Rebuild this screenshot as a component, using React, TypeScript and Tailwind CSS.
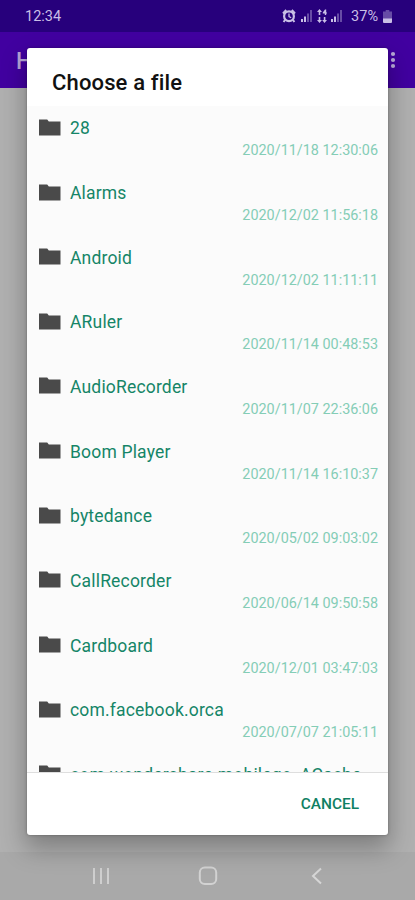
const files = [
  { name: "28", date: "2020/11/18 12:30:06" },
  { name: "Alarms", date: "2020/12/02 11:56:18" },
  { name: "Android", date: "2020/12/02 11:11:11" },
  { name: "ARuler", date: "2020/11/14 00:48:53" },
  { name: "AudioRecorder", date: "2020/11/07 22:36:06" },
  { name: "Boom Player", date: "2020/11/14 16:10:37" },
  { name: "bytedance", date: "2020/05/02 09:03:02" },
  { name: "CallRecorder", date: "2020/06/14 09:50:58" },
  { name: "Cardboard", date: "2020/12/01 03:47:03" },
  { name: "com.facebook.orca", date: "2020/07/07 21:05:11" },
  { name: "com.wondershare.mobilego_ACache", date: "" },
];

function FolderIcon() {
  return (
    <svg width="22" height="17" viewBox="0 0 22 17" fill="#4a4a4a" className="relative -top-px shrink-0">
      <path d="M0 .5h8.2l1.6 2H21.5v14H0z" />
    </svg>
  );
}

function SignalIcon() {
  return (
    <svg width="12" height="12" viewBox="0 0 12 12" fill="#c9bfe6">
      <rect x="0" y="9" width="2" height="3" />
      <rect x="3" y="6.5" width="2" height="5.5" />
      <rect x="6" y="3.5" width="2" height="8.5" fillOpacity=".4" />
      <rect x="9" y="0" width="2" height="12" fillOpacity=".4" />
    </svg>
  );
}

function StatusBar() {
  return (
    <div className="flex h-8 items-center bg-[#27007c] pr-[23px] pl-[25px] text-[#c9bfe6]">
      <span className="pt-[2px] text-[14.5px] leading-none">12:34</span>
      <div className="ml-auto flex items-center">
        {/* Alarm */}
        <svg width="14" height="14" viewBox="0 0 14 14" className="mr-[5px]">
          <path d="M1 4.5 4.2 1M13 4.5 9.8 1M3 11l-1.4 2M11 11l1.4 2" stroke="#c9bfe6" strokeWidth="2" />
          <circle cx="7" cy="7.3" r="4.9" fill="#27007c" stroke="#c9bfe6" strokeWidth="2.2" />
          <path d="M7 4.4v3.2l2.2 1.2" fill="none" stroke="#c9bfe6" strokeWidth="1.3" />
        </svg>
        <SignalIcon />
        {/* Mobile data */}
        <svg width="10" height="14" viewBox="0 0 10 14" className="mr-[4px] ml-[4px]" fill="#c9bfe6">
          <path d="M2.5 0 5 3H3.3v3H1.7V3H0zM2.5 14 0 11h1.7V8h1.6v3H5z" />
          <path d="M5.8 3.4 8 .4h1.2v3H10v1.2h-.8V6H7.8V4.6h-2zM6.8 8h1.6v3H10l-2.5 3L5.2 11h1.6z" />
        </svg>
        <SignalIcon />
        <span className="ml-[8px] pt-[2px] text-[14.5px] leading-none">37%</span>
        <svg width="9" height="13" viewBox="0 0 9 13" className="ml-[5px]" fill="#c9bfe6">
          <path d="M2.7 0h3.6v1.5H9V9H0V1.5h2.7z" fillOpacity=".4" />
          <path d="M0 8.5h9V12a1 1 0 0 1-1 1H1a1 1 0 0 1-1-1z" />
        </svg>
      </div>
    </div>
  );
}

function AppBar() {
  return (
    <div className="flex h-14 items-center justify-between bg-[#4100a0] pr-[19px] pl-[16px] text-[#b5a3d6]">
      <span className="pt-[2px] text-[23px] leading-none font-medium">H</span>
      <svg width="6" height="18" viewBox="0 0 6 18" fill="#b9aad8">
        <circle cx="3" cy="3" r="2.1" />
        <circle cx="3" cy="9" r="2.1" />
        <circle cx="3" cy="15" r="2.1" />
      </svg>
    </div>
  );
}

function NavBar() {
  return (
    <div className="flex h-12 items-center bg-[#a9a9a9] pr-[93px] pl-[92px]">
      <svg width="18" height="18" viewBox="0 0 18 18" fill="none" stroke="#cfcfcf" strokeWidth="2">
        <path d="M2 1v16M9 1v16M16 1v16" />
      </svg>
      <svg width="20" height="20" viewBox="0 0 20 20" fill="none" stroke="#d2d2d2" strokeWidth="2" className="ml-[88px]">
        <rect x="1.8" y="1.5" width="16.4" height="16.4" rx="5" />
      </svg>
      <svg width="12" height="18" viewBox="0 0 12 18" fill="none" stroke="#d6d6d6" strokeWidth="2" className="ml-auto">
        <path d="M11 1.5 3 9l8 7.5" />
      </svg>
    </div>
  );
}

function FileDialog() {
  return (
    <div className="absolute top-12 left-[27px] flex h-[787px] w-[361px] flex-col overflow-hidden rounded-[3px] bg-white shadow-[0_12px_24px_2px_rgba(0,0,0,0.28),0_0_3px_rgba(0,0,0,0.3)]">
      <h1 className="h-[58px] shrink-0 pt-[21px] pl-[25px] text-[22px] leading-[28px] font-medium tracking-[0.15px] text-[#111]">
        Choose a file
      </h1>
      <ul className="h-[667px] shrink-0 overflow-hidden border-b border-[#dedede] bg-[#fbfbfb]">
        {files.map((file) => (
          <li key={file.name} className="h-[64.65px] pt-[11.4px] pr-[10px] pl-[12px]">
            <div className="flex h-[22px] items-center gap-[9px]">
              <FolderIcon />
              <span className="text-[17.5px] leading-[22px] tracking-[0.18px] whitespace-nowrap text-[#158567]">
                {file.name}
              </span>
            </div>
            <div className="pt-px text-right text-[14.4px] leading-[22px] text-[#84cdb6]">{file.date}</div>
          </li>
        ))}
      </ul>
      <div className="flex flex-1 items-center justify-end pt-[2px] pr-[29px]">
        <button className="text-[15.4px] leading-none font-medium text-[#0f8063]">CANCEL</button>
      </div>
    </div>
  );
}

export default function App() {
  return (
    <div className="relative flex h-[900px] w-[415px] flex-col overflow-hidden bg-[#b0b0b0] font-[Roboto,sans-serif]">
      <StatusBar />
      <AppBar />
      <div className="flex-1" />
      <NavBar />
      <FileDialog />
    </div>
  );
}
